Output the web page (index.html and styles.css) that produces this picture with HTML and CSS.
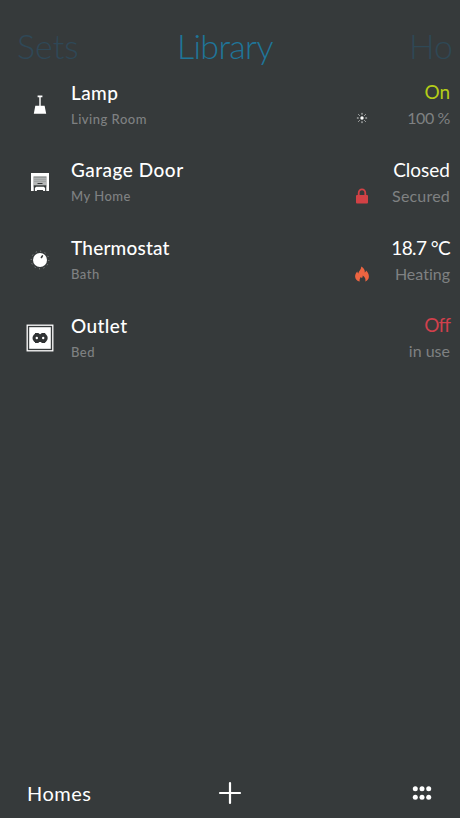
FILE: index.html
```html
<!DOCTYPE html>
<html lang="en">
<head>
  <meta charset="utf-8">
  <meta name="viewport" content="width=device-width">
  <title>Library</title>
  <link rel="stylesheet" href="styles.css">
</head>
<body>
  <nav class="tabs">
    <a class="tab-prev">Sets</a>
    <a class="tab-active">Library</a>
    <a class="tab-next">Ho</a>
  </nav>

  <main class="devices">
    <div class="device">
      <svg class="device-icon" viewBox="0 0 28 28">
        <path fill="#fff" d="M11.6 4.5h4.8v1.7h-1.7v8.6h3.9l1.6 7.9H7.8l1.5-7.9h4V6.2h-1.7z"/>
      </svg>
      <div class="device-text">
        <div class="name">Lamp</div>
        <div class="room">Living Room</div>
      </div>
      <svg class="status-icon" viewBox="0 0 16 16">
        <circle cx="8" cy="8" r="1.7" fill="#fff"/>
        <path stroke="#d5d6d6" stroke-width="1" d="M8 2.9v1.8M8 11.3v1.8M2.9 8h1.8M11.3 8h1.8M4.4 4.4l1.2 1.2M10.4 10.4l1.2 1.2M11.6 4.4l-1.2 1.2M5.6 10.4l-1.2 1.2"/>
      </svg>
      <div class="device-state">
        <div class="value on">On</div>
        <div class="detail detail-level">100 %</div>
      </div>
    </div>

    <div class="device">
      <svg class="device-icon" viewBox="0 0 28 28">
        <path fill="#fff" d="M5 5h18v18h-2.7V9H7.7v14H5z"/>
        <path fill="#b5b7b7" d="M8 9.2h12v8.4H8z"/>
        <path stroke="#8b8e8e" stroke-width=".6" d="M8 11.3h12M8 13.3h12"/>
        <path stroke="#353839" stroke-width="1" d="M11.5 15.5h5M7.7 18h12.6"/>
        <path stroke="#777a7a" stroke-width=".7" d="M7.5 8.7h13"/>
        <path fill="#fff" d="M10.2 18.8h7.6l1.3 1.2v3h-2v-1.1h-6.2V23h-2v-3z"/>
      </svg>
      <div class="device-text">
        <div class="name name-garage">Garage Door</div>
        <div class="room">My Home</div>
      </div>
      <svg class="status-icon" viewBox="0 0 16 16">
        <path fill="none" stroke="#d24145" stroke-width="1.8" d="M4.7 8V5a3.3 3.7 0 0 1 6.6 0v3"/>
        <rect x="2" y="7" width="12" height="8.5" rx="1" fill="#d24145"/>
      </svg>
      <div class="device-state">
        <div class="value">Closed</div>
        <div class="detail detail-lock">Secured</div>
      </div>
    </div>

    <div class="device">
      <svg class="device-icon" viewBox="0 0 28 28">
        <circle cx="14" cy="14" r="8.8" fill="none" stroke="#a2a4a4" stroke-width="1" stroke-dasharray=".9 3.71"/>
        <circle cx="14" cy="14" r="7" fill="#fff"/>
        <path stroke="#353839" stroke-width="1.6" stroke-linecap="round" d="M15.4 11.5l1-1.6"/>
      </svg>
      <div class="device-text">
        <div class="name name-thermo">Thermostat</div>
        <div class="room">Bath</div>
      </div>
      <svg class="status-icon" viewBox="0 0 16 16">
        <path fill="#ec6441" d="M7.1.4c2.5 1.3 4 3.3 3.7 6 .8-.4 1.1-1 1.2-1.9 1.8 1.7 2.9 3.8 2.9 6 0 2.4-1.3 4.2-3.7 5.1.9-2.5-.2-4.6-2.5-6.2.1 1.2-.2 2-.9 2.7-.3-.5-.6-.9-1.1-1.1-.8 1.7-1.5 2.8-.9 4.6C3 14.8 1.1 13 1.1 10.4c0-2 1-3.5 2.2-4.8.2.9.5 1.5 1.1 1.9C4.5 4.5 7.6 3.6 7.1.4z"/>
      </svg>
      <div class="device-state">
        <div class="value value-temp">18.7 °C</div>
        <div class="detail">Heating</div>
      </div>
    </div>

    <div class="device">
      <svg class="device-icon" viewBox="0 0 28 28">
        <rect x="1.2" y="1.2" width="25.6" height="25.6" fill="none" stroke="#fff" stroke-width="1.3"/>
        <rect x="3.2" y="3.2" width="21.6" height="21.6" fill="#fff"/>
        <circle cx="11.2" cy="14" r="4.7" fill="#303334"/>
        <circle cx="17" cy="14" r="4.7" fill="#303334"/>
        <path stroke="#303334" stroke-width="1.5" d="M9 9.7h3.6M15.6 9.7h3.6M9 18.3h3.6M15.6 18.3h3.6"/>
        <circle cx="10.8" cy="14" r="1.2" fill="#fff"/>
        <circle cx="17.2" cy="14" r="1.2" fill="#fff"/>
      </svg>
      <div class="device-text">
        <div class="name">Outlet</div>
        <div class="room">Bed</div>
      </div>
      <div class="device-state">
        <div class="value off">Off</div>
        <div class="detail">in use</div>
      </div>
    </div>
  </main>

  <footer class="toolbar">
    <a class="homes">Homes</a>
    <svg class="add" viewBox="0 0 24 24">
      <path stroke="#fff" stroke-width="2.2" stroke-linecap="round" d="M12 2v20M2 12h20"/>
    </svg>
    <svg class="menu" viewBox="0 0 20 16">
      <g fill="#fff">
        <circle cx="3.3" cy="3.8" r="2.5"/>
        <circle cx="10" cy="3.8" r="2.5"/>
        <circle cx="16.7" cy="3.8" r="2.5"/>
        <circle cx="3.3" cy="12.3" r="2.5"/>
        <circle cx="10" cy="12.3" r="2.5"/>
        <circle cx="16.7" cy="12.3" r="2.5"/>
      </g>
    </svg>
  </footer>
</body>
</html>
```
FILE: styles.css
```css
html, body {
  margin: 0;
  height: 100%;
}

body {
  display: flex;
  flex-direction: column;
  overflow: hidden;
  background-color: #363a3b;
  color: #fff;
  font-family: Lato, "Open Sans", sans-serif;
  font-variant-ligatures: none;
}

svg {
  display: block;
  flex-shrink: 0;
}

.tabs {
  display: grid;
  grid-template-columns: 160px auto 1fr;
  height: 66px;
  padding: 25px 7px 0 17px;
  box-sizing: border-box;
  align-items: center;
  font-size: 34px;
  font-weight: 300;
  line-height: 40px;
}

.tab-active {
  color: #1f7599;
  letter-spacing: -0.7px;
}

.tab-prev {
  color: #2f4857;
}

.tab-next {
  color: #2f4855;
  text-align: right;
}

.devices {
  flex: 1;
}

.device {
  display: flex;
  align-items: center;
  height: 77.67px;
  padding: 0 10px 0 26px;
}

.device-icon {
  width: 28px;
  height: 28px;
}

.device-text {
  flex: 1;
  margin-left: 17px;
  padding-top: 2px;
}

.name, .value {
  font-size: 19px;
  line-height: 26px;
  letter-spacing: 0.4px;
}

.name {
  font-weight: 500;
}

.name-garage {
  letter-spacing: 0.5px;
}

.name-thermo {
  letter-spacing: 0.2px;
}

.room, .detail {
  line-height: 26px;
  color: #7f8182;
}

.room {
  font-size: 13px;
  font-weight: 500;
  letter-spacing: 0.5px;
}

.status-icon {
  width: 16px;
  height: 16px;
  margin-top: 27px;
}

.device-state {
  width: 80px;
  padding-top: 1px;
  text-align: right;
}

.value {
  letter-spacing: 0;
}

.value-temp {
  letter-spacing: -0.6px;
}

.detail {
  font-size: 16px;
}

.detail-level {
  letter-spacing: -0.4px;
}

.detail-lock {
  letter-spacing: 0.2px;
}

.on {
  color: #b5cc18;
}

.off {
  color: #d0404c;
  letter-spacing: -0.9px;
}

.toolbar {
  display: grid;
  grid-template-columns: 1fr auto 1fr;
  align-items: center;
  height: 50px;
  padding: 0 28px 0 27px;
}

.homes {
  font-size: 20px;
  line-height: 22px;
  padding-bottom: 1px;
  letter-spacing: 0.5px;
}

.add {
  width: 24px;
  height: 24px;
}

.menu {
  width: 20px;
  height: 16px;
  justify-self: end;
}
```
